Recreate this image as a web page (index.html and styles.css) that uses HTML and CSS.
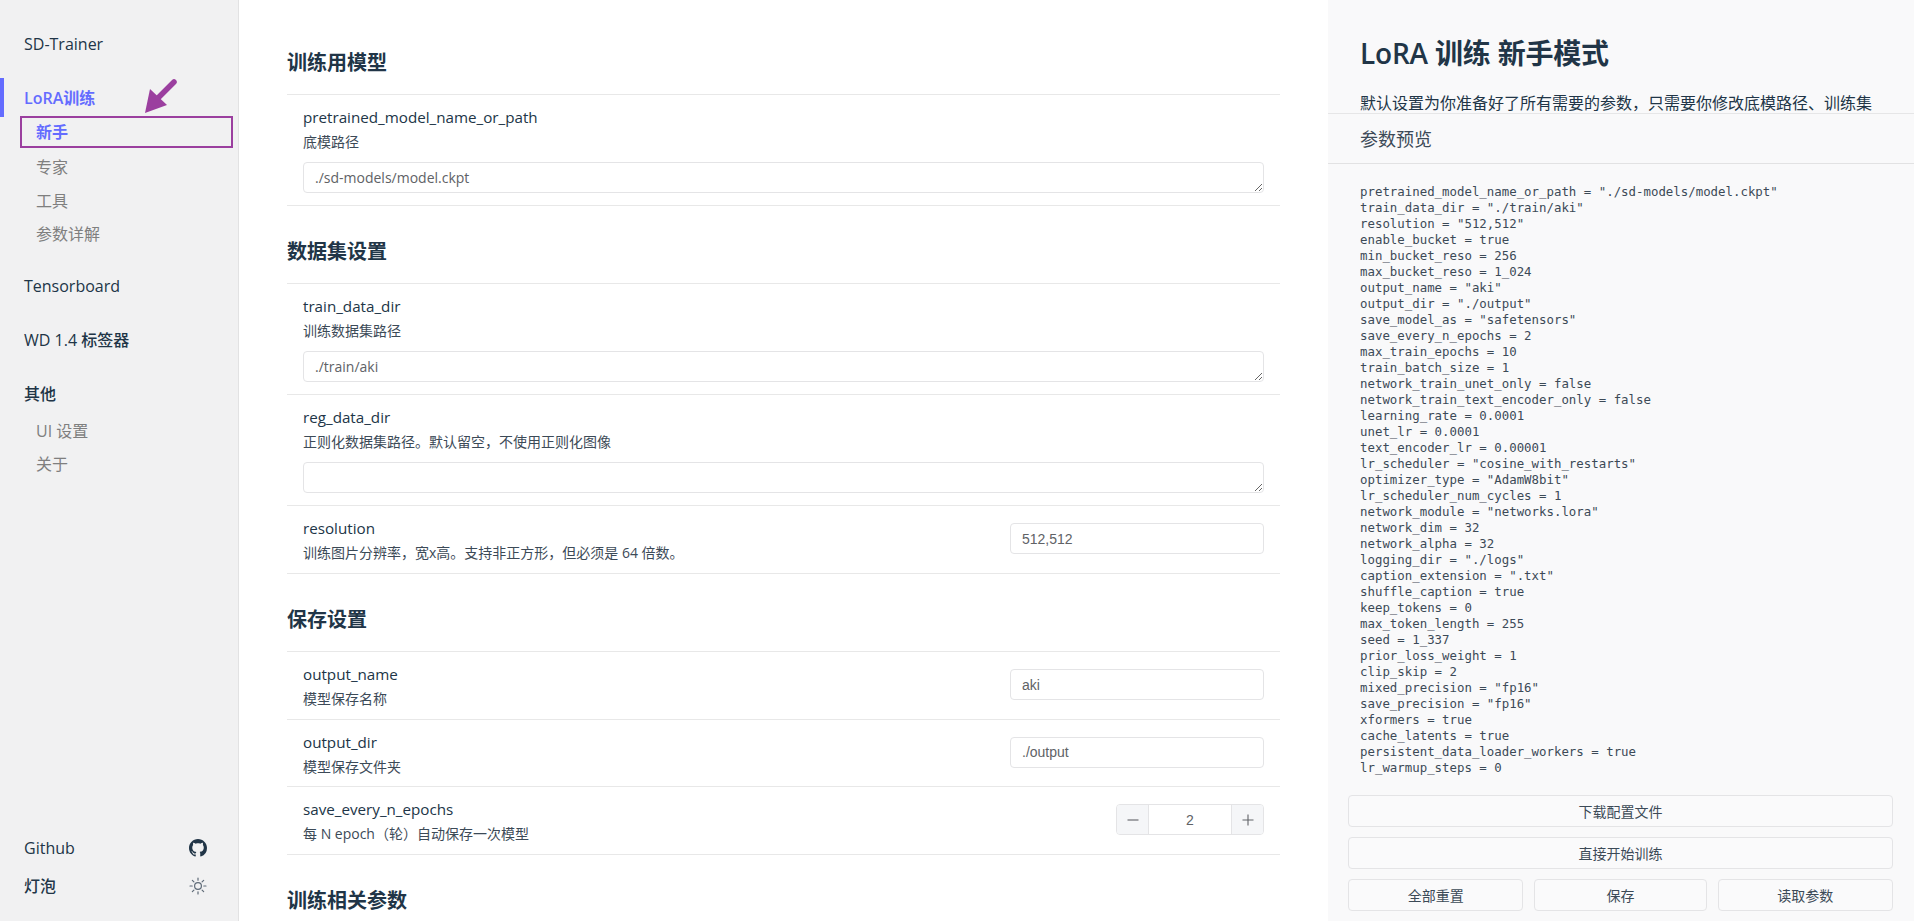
FILE: index.html
```html
<!DOCTYPE html>
<html lang="zh-CN">
<head>
<meta charset="utf-8">
<title>SD-Trainer</title>
<link rel="stylesheet" href="styles.css">
</head>
<body>
<div class="app">
  <nav class="sidebar">
    <div class="nav-title brand">SD-Trainer</div>
    <div class="nav-active">LoRA训练</div>
    <div class="nav-arrow">
      <svg width="40" height="40" viewBox="0 0 40 40"><path d="M33 3 L17 19" stroke="#9b3f9f" stroke-width="5.5" stroke-linecap="round" fill="none"/><path d="M4 34 L9 10 L26 26 Z" fill="#9b3f9f"/></svg>
    </div>
    <div class="nav-current">新手</div>
    <div class="nav-items first">
      <div class="nav-item">专家</div>
      <div class="nav-item">工具</div>
      <div class="nav-item">参数详解</div>
    </div>
    <div class="nav-title tensor">Tensorboard</div>
    <div class="nav-title group">WD 1.4 标签器</div>
    <div class="nav-title group">其他</div>
    <div class="nav-items">
      <div class="nav-item">UI 设置</div>
      <div class="nav-item">关于</div>
    </div>
    <div class="nav-foot">
      <div class="foot-row">
        <span>Github</span>
        <svg class="foot-icon" viewBox="0 0 16 16"><path fill="#213547" d="M8 0C3.58 0 0 3.58 0 8c0 3.54 2.29 6.53 5.47 7.59.4.07.55-.17.55-.38 0-.19-.01-.82-.01-1.49-2.01.37-2.53-.49-2.69-.94-.09-.23-.48-.94-.82-1.13-.28-.15-.68-.52-.01-.53.63-.01 1.08.58 1.23.82.72 1.21 1.87.87 2.33.66.07-.52.28-.87.51-1.07-1.78-.2-3.64-.89-3.64-3.95 0-.87.31-1.59.82-2.15-.08-.2-.36-1.02.08-2.12 0 0 .67-.21 2.2.82.64-.18 1.32-.27 2-.27s1.36.09 2 .27c1.53-1.04 2.2-.82 2.2-.82.44 1.1.16 1.92.08 2.12.51.56.82 1.27.82 2.15 0 3.07-1.87 3.75-3.65 3.95.29.25.54.73.54 1.48 0 1.07-.01 1.93-.01 2.2 0 .21.15.46.55.38A8.01 8.01 0 0 0 16 8c0-4.42-3.58-8-8-8z"/></svg>
      </div>
      <div class="foot-row">
        <span>灯泡</span>
        <svg class="foot-icon" viewBox="0 0 18 18" fill="none" stroke="#5f6b78" stroke-width="1.2" stroke-linecap="round"><circle cx="9" cy="9" r="3.4"/><path d="M9 1v2.2M9 14.8V17M1 9h2.2M14.8 9H17M3.35 3.35l1.55 1.55M13.1 13.1l1.55 1.55M3.35 14.65l1.55-1.55M13.1 4.9l1.55-1.55"/></svg>
      </div>
    </div>
  </nav>

  <main class="main">
    <section class="section">
      <h2 class="section-title">训练用模型</h2>
      <div class="rows">
        <div class="row stacked">
          <div class="label">pretrained_model_name_or_path</div>
          <div class="desc">底模路径</div>
          <textarea class="area" spellcheck="false">./sd-models/model.ckpt</textarea>
        </div>
      </div>
    </section>
    <section class="section">
      <h2 class="section-title">数据集设置</h2>
      <div class="rows">
        <div class="row stacked">
          <div class="label">train_data_dir</div>
          <div class="desc">训练数据集路径</div>
          <textarea class="area" spellcheck="false">./train/aki</textarea>
        </div>
        <div class="row stacked">
          <div class="label">reg_data_dir</div>
          <div class="desc">正则化数据集路径。默认留空，不使用正则化图像</div>
          <textarea class="area" spellcheck="false"></textarea>
        </div>
        <div class="row inline">
          <div>
            <div class="label">resolution</div>
            <div class="desc">训练图片分辨率，宽x高。支持非正方形，但必须是 64 倍数。</div>
          </div>
          <input class="field" value="512,512">
        </div>
      </div>
    </section>
    <section class="section">
      <h2 class="section-title">保存设置</h2>
      <div class="rows">
        <div class="row inline">
          <div>
            <div class="label">output_name</div>
            <div class="desc">模型保存名称</div>
          </div>
          <input class="field" value="aki">
        </div>
        <div class="row inline">
          <div>
            <div class="label">output_dir</div>
            <div class="desc">模型保存文件夹</div>
          </div>
          <input class="field" value="./output">
        </div>
        <div class="row inline">
          <div>
            <div class="label">save_every_n_epochs</div>
            <div class="desc">每 N epoch（轮）自动保存一次模型</div>
          </div>
          <div class="stepper">
            <span class="step left"><svg width="14" height="14" viewBox="0 0 14 14"><path d="M1.5 7h11" stroke="#606266" stroke-width="1.1"/></svg></span>
            <span class="step-value">2</span>
            <span class="step right"><svg width="14" height="14" viewBox="0 0 14 14"><path d="M1.5 7h11M7 1.5v11" stroke="#606266" stroke-width="1.1"/></svg></span>
          </div>
        </div>
      </div>
    </section>
    <section class="section">
      <h2 class="section-title">训练相关参数</h2>
    </section>
  </main>

  <aside class="panel">
    <div class="intro">
      <h1 class="intro-title">LoRA 训练 新手模式</h1>
      <p class="intro-text">默认设置为你准备好了所有需要的参数，只需要你修改底模路径、训练集路径、训练轮数即可一键训练模型。</p>
    </div>
    <div class="preview-head">参数预览</div>
    <pre class="code">pretrained_model_name_or_path = "./sd-models/model.ckpt"
train_data_dir = "./train/aki"
resolution = "512,512"
enable_bucket = true
min_bucket_reso = 256
max_bucket_reso = 1_024
output_name = "aki"
output_dir = "./output"
save_model_as = "safetensors"
save_every_n_epochs = 2
max_train_epochs = 10
train_batch_size = 1
network_train_unet_only = false
network_train_text_encoder_only = false
learning_rate = 0.0001
unet_lr = 0.0001
text_encoder_lr = 0.00001
lr_scheduler = "cosine_with_restarts"
optimizer_type = "AdamW8bit"
lr_scheduler_num_cycles = 1
network_module = "networks.lora"
network_dim = 32
network_alpha = 32
logging_dir = "./logs"
caption_extension = ".txt"
shuffle_caption = true
keep_tokens = 0
max_token_length = 255
seed = 1_337
prior_loss_weight = 1
clip_skip = 2
mixed_precision = "fp16"
save_precision = "fp16"
xformers = true
cache_latents = true
persistent_data_loader_workers = true
lr_warmup_steps = 0</pre>
    <div class="actions">
      <button class="btn">下载配置文件</button>
      <button class="btn">直接开始训练</button>
      <div class="btn-row">
        <button class="btn">全部重置</button>
        <button class="btn">保存</button>
        <button class="btn">读取参数</button>
      </div>
    </div>
  </aside>
</div>
</body>
</html>
```
FILE: styles.css
```css
* { box-sizing: border-box; }
html, body { margin: 0; height: 100%; overflow: hidden; }
body {
  font-family: "Open Sans", "Noto Sans CJK SC", sans-serif;
  font-size: 16px;
  line-height: 24px;
  color: #213547;
  background: #fff;
}
.app { display: flex; height: 921px; }

/* sidebar */
.sidebar {
  position: relative;
  flex: 0 0 239px;
  display: flex;
  flex-direction: column;
  padding-top: 32px;
  background: #f1f1f2;
  border-right: 1px solid #e2e2e3;
}
.nav-title { padding-left: 24px; font-weight: 500; height: 24px; }
.brand { margin-bottom: 22px; }
.tensor { margin-top: 23px; }
.group { margin-top: 30px; }
.nav-active {
  height: 39px;
  display: flex;
  align-items: center;
  padding-left: 20px;
  border-left: 4px solid #646cff;
  color: #646cff;
  font-weight: 600;
}
.nav-arrow { position: absolute; left: 141px; top: 79px; width: 40px; height: 40px; }
.nav-arrow svg { display: block; }
.nav-current {
  height: 32px;
  width: 213px;
  margin: -1px 0 2.5px 20px;
  padding-left: 14px;
  border: 2px solid #9b3f9f;
  display: flex;
  align-items: center;
  color: #646cff;
  font-weight: 600;
}
.nav-items { padding-left: 36px; margin-top: 8.5px; color: #7f7f7f; font-size: 16px; }
.nav-items.first { margin-top: 0; }
.nav-item { height: 33.5px; display: flex; align-items: center; }
.nav-items .nav-item:nth-child(2):last-child { height: 32.5px; }
.nav-foot { margin-top: auto; padding: 0 31px 23px 24px; }
.foot-row { display: flex; align-items: center; justify-content: space-between; height: 24px; font-weight: 500; }
.foot-row + .foot-row { margin-top: 14px; }
.foot-icon { width: 18px; height: 18px; display: block; }

/* main column */
.main { flex: 0 0 1089px; padding: 17px 48px 0 48px; overflow: hidden; }
.section-title { margin: 32px 0 0; padding-bottom: 17.4px; font-size: 20px; line-height: 28px; font-weight: 700; }
.section:first-child .section-title { padding-bottom: 17px; }
.rows { border-bottom: 1px solid #e8e8e8; }
.row { border-top: 1px solid #e8e8e8; padding: 10px 16px 0 16px; }
.stacked { height: 111px; }
.inline {
  height: 67.5px;
  display: flex;
  align-items: flex-start;
  justify-content: space-between;
}
.label { font-size: 15.2px; font-weight: 500; line-height: 24px; margin-bottom: 1px; }
.desc { font-size: 14px; line-height: 24px; color: #3c4a57; }
.area {
  display: block;
  width: 100%;
  height: 31px;
  margin-top: 8px;
  padding: 5px 11px;
  border: 1px solid #e4e4e6;
  border-radius: 4px;
  background: #fff;
  font-family: "Open Sans", sans-serif;
  font-size: 14px;
  line-height: 19px;
  color: #606266;
  resize: vertical;
  outline: none;
}
.field {
  width: 254px;
  height: 31px;
  margin-top: 7px;
  padding: 0 11px;
  border: 1px solid #e4e4e6;
  border-radius: 4px;
  font-family: "Liberation Sans", sans-serif;
  font-size: 14px;
  color: #606266;
  background: #fff;
  outline: none;
}
.stepper {
  display: flex;
  width: 148px;
  height: 31px;
  margin-top: 7px;
  border: 1px solid #e4e4e6;
  border-radius: 4px;
  font-family: "Liberation Sans", sans-serif;
  font-size: 14px;
  color: #606266;
}
.step { flex: 0 0 32px; display: flex; align-items: center; justify-content: center; background: #f5f6f8; }
.step.left { border-right: 1px solid #e4e4e6; border-radius: 3px 0 0 3px; }
.step.right { border-left: 1px solid #e4e4e6; border-radius: 0 3px 3px 0; }
.step-value { flex: 1; display: flex; align-items: center; justify-content: center; }

/* right panel */
.panel { flex: 0 0 586px; display: flex; flex-direction: column; background: #f9f9fa; min-width: 0; }
.intro { height: 113px; padding: 33px 32px 0; overflow: hidden; }
.intro-title { margin: 0; font-size: 28px; line-height: 40px; font-weight: 600; letter-spacing: -0.2px; }
.intro-text { margin: 18px 0 0; font-size: 16px; line-height: 24px; }
.preview-head {
  height: 51px;
  padding: 0 32px;
  display: flex;
  align-items: center;
  font-size: 18px;
  color: #3c4a57;
  border-top: 1px solid #e6e6e7;
  border-bottom: 1px solid #e2e2e3;
}
.code {
  flex: 1;
  min-height: 0;
  margin: 0;
  padding: 20px 32px 0;
  overflow: hidden;
  font-family: "DejaVu Sans Mono", monospace;
  font-size: 12.4px;
  line-height: 16px;
  color: #3c4a57;
}
.actions { display: flex; flex-direction: column; gap: 10px; padding: 0 21px 10px 20px; }
.btn-row { display: grid; grid-template-columns: 175fr 172fr 175fr; gap: 11px; }
.btn {
  height: 32px;
  border: 1px solid #e4e4e6;
  border-radius: 4px;
  background: #fafafb;
  font-family: "Noto Sans CJK SC", sans-serif;
  font-size: 14px;
  color: #3c4a57;
  padding: 0;
}
```
